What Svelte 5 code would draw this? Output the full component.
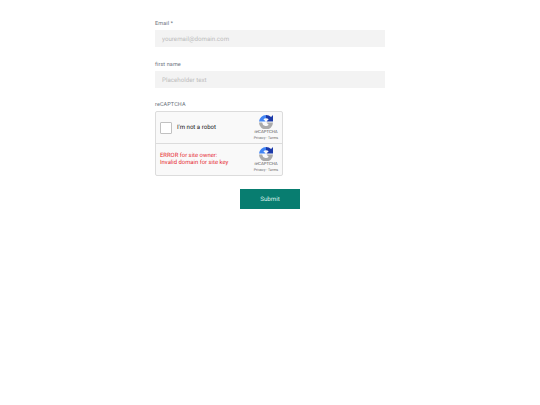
<script lang="ts">
  const fields = [
    { id: "email", label: "Email *", placeholder: "youremail@domain.com" },
    { id: "first", label: "first name", placeholder: "Placeholder text" }
  ];
</script>

{#snippet logo()}
  <div class="brand">
    <svg width="14" height="14" viewBox="0 0 16 16" aria-hidden="true">
      <path d="M8 0a8 8 0 0 1 5.8 2.4L16 0v7.5H8.5l2.6-2.6A4.4 4.4 0 0 0 8 3.6z" fill="#1c3aa9" />
      <path d="M0 7.5A8 8 0 0 1 8 0v3.6a4.4 4.4 0 0 0-3 1.3l2.6 2.6z" fill="#4285f4" />
      <path d="M0 8.5h3.6a4.4 4.4 0 0 0 7.5 2.6L8.5 8.5H16A8 8 0 0 1 0 8.5z" fill="#ababab" />
    </svg>
    <span class="name">reCAPTCHA</span>
    <span class="terms">Privacy - Terms</span>
  </div>
{/snippet}

<form class="form" onsubmit={(e) => e.preventDefault()}>
  {#each fields as field}
    <div class="field">
      <label for={field.id}>{field.label}</label>
      <input id={field.id} type="text" placeholder={field.placeholder} />
    </div>
  {/each}

  <div class="captcha-field">
    <span class="label">reCAPTCHA</span>
    <div class="captcha">
      <div class="row">
        <span class="check"></span>
        <span class="robot">I'm not a robot</span>
        {@render logo()}
      </div>
      <div class="row error">
        <p>ERROR for site owner:<br />Invalid domain for site key</p>
        {@render logo()}
      </div>
    </div>
  </div>

  <button type="submit">Submit</button>
</form>

<style>
  :global(body) {
    background: #fff;
    font-family: Roboto, "Liberation Sans", sans-serif;
    text-rendering: geometricPrecision;
  }

  .form {
    width: 230px;
    margin: 0 auto;
    padding: 20px 0 0;
    display: flex;
    flex-direction: column;
  }

  .field {
    margin-bottom: 13px;
  }

  .field + .field {
    margin-top: 1px;
  }

  label,
  .label {
    display: block;
    padding-top: 1px;
    font-size: 5.5px;
    line-height: 7px;
    letter-spacing: 0.1px;
    color: #6b717c;
    margin-bottom: 2px;
  }

  input {
    display: block;
    box-sizing: border-box;
    width: 100%;
    height: 17px;
    padding: 0 7px;
    border: 0;
    border-radius: 0;
    background: #f3f3f3;
    font-family: inherit;
    font-size: 6.2px;
    text-rendering: geometricPrecision;
    outline: none;
  }

  input::placeholder {
    color: #bdbdbd;
    opacity: 1;
  }

  .captcha {
    width: 128px;
    box-sizing: border-box;
    border: 1px solid #dcdcdc;
    border-radius: 2px;
    background: #f9f9f9;
  }

  .row {
    height: 31px;
    display: flex;
    align-items: center;
    padding: 0 2px 0 4px;
  }

  .row.error {
    border-top: 1px solid #dcdcdc;
  }

  .check {
    width: 12px;
    height: 12px;
    box-sizing: border-box;
    border: 1px solid #c1c1c1;
    border-radius: 1px;
    background: #fff;
    margin-right: 5px;
  }

  .robot {
    font-size: 6.1px;
    color: #222;
  }

  .error p {
    margin: 0;
    font-size: 5.9px;
    line-height: 7px;
    color: #e62a32;
  }

  .brand {
    margin-left: auto;
    width: 28px;
    display: flex;
    flex-direction: column;
    align-items: center;
  }

  .name {
    font-size: 4.3px;
    line-height: 5px;
    color: #555;
    margin-top: 1px;
  }

  .terms {
    font-size: 3.6px;
    line-height: 4px;
    color: #666;
    margin-top: 1px;
    white-space: nowrap;
  }

  button {
    align-self: center;
    width: 60px;
    height: 20px;
    margin-top: 13px;
    border: 0;
    border-radius: 0;
    background: #087d70;
    color: #d8efe9;
    font-family: inherit;
    font-size: 6.2px;
    text-rendering: geometricPrecision;
    padding: 0;
  }
</style>
